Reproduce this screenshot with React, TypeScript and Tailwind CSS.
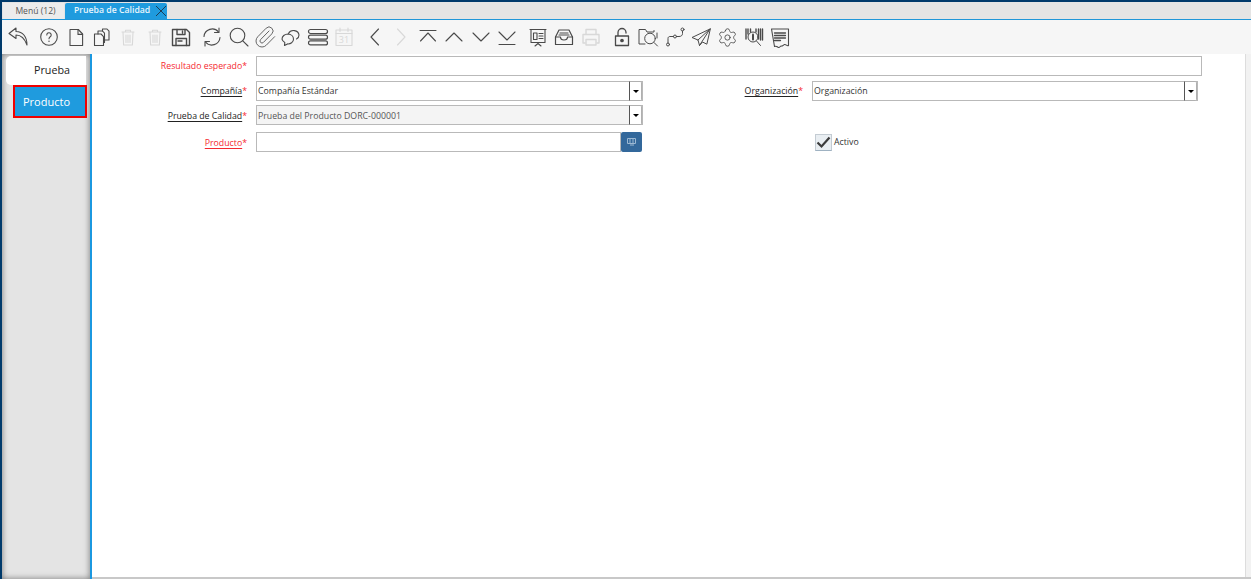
import { JSX, ReactNode } from "react";
import { Paperclip, Settings } from "lucide-react";

const font = { fontFamily: '"Open Sans", sans-serif' };

const Svg = ({ children, off, sw = 1.1 }: { children: ReactNode; off?: boolean; sw?: number }): JSX.Element => (
    <svg
        width="24"
        height="24"
        viewBox="0 0 24 24"
        fill="none"
        stroke={off ? "#d8d8d8" : "#4a4a4a"}
        strokeWidth={sw}
        strokeLinecap="round"
        strokeLinejoin="round"
    >
        {children}
    </svg>
);

const Trash = (): JSX.Element => (
    <Svg off>
        <path d="M6 7h12M9.500 7V5.200h5V7M7 7l.6 13h8.800l.6-13M10 10v7.500M12 10v7.500M14 10v7.500" />
    </Svg>
);

// toolbar groups, every cell is the same width
const groups: ReactNode[][] = [
    [
        <Svg>
            <path d="M10 3L3 8.500L10 13.500V10C15 10 18.500 13 21 20C21 12 17 6.500 10 6.500Z" />
        </Svg>,
    ],
    [
        <Svg>
            <circle cx="12" cy="12" r="8.300" />
            <path d="M9.800 10a2.200 2.200 0 1 1 3.400 1.800c-.8.6-1.200 1-1.200 2" />
            <path d="M12 16.100v.2" strokeWidth="1.400" />
        </Svg>,
        <Svg>
            <path d="M6 4.500h8.300L18.600 9v11.500H6z" />
            <path d="M14 4.500v4.900h4.600" />
        </Svg>,
        <Svg>
            <path d="M4.500 9h6.500l2.500 2.600V20.500H4.500z" />
            <path d="M8 9V6h4.500l2 2.200V17.500h-1" />
            <path d="M12.500 6V4h4.500l2 2.200V15h-4.500" />
        </Svg>,
        <Trash />,
        <Trash />,
        <Svg sw={1.4}>
            <path d="M3.500 4.500h14L20.500 7.500v13h-17z" />
            <path d="M8 4.500v5h8v-5M13.500 6v2M7 20.500v-7h10.500v7M9 16h4" />
        </Svg>,
    ],
    [
        <Svg>
            <path d="M4 11.500A8.200 8.200 0 0 1 18.500 7M20 12.500A8.200 8.200 0 0 1 5.500 17" />
            <path d="M19 3v4.500h-4.500M5 21v-4.500h4.500" />
        </Svg>,
        <Svg>
            <circle cx="10.500" cy="10.500" r="7.300" />
            <path d="M15.800 15.800L21 21" />
        </Svg>,
        <Paperclip size={24} strokeWidth={1} color="#666666" />,
        <Svg>
            <path d="M9.500 8.500a5.500 5 0 0 1 10.500 1.500c0 2-1 3.300-2.500 4" />
            <path d="M9 9a6 5.200 0 0 1 5.500 5.200c0 3-3 5-6 4.700L5.500 20.500l.3-3A5 5 0 0 1 3 14.200 6 5.200 0 0 1 9 9z" />
        </Svg>,
        <Svg sw={1.2}>
            <rect x="2.500" y="4.500" width="19" height="4" rx="2" />
            <rect x="2.500" y="10.200" width="19" height="4" rx="2" />
            <rect x="2.500" y="15.900" width="19" height="4" rx="2" />
        </Svg>,
        <Svg off>
            <rect x="4" y="5" width="16" height="15.500" />
            <path d="M4 8.500h16M8 3v3.500M16 3v3.500" />
            <text x="12" y="18" textAnchor="middle" fontSize="9" fill="#d8d8d8" stroke="none" style={font}>
                31
            </text>
        </Svg>,
    ],
    [
        <Svg>
            <path d="M15.500 4L8 12l7.500 8" />
        </Svg>,
        <Svg off>
            <path d="M8.500 4L16 12l-7.500 8" />
        </Svg>,
        <Svg>
            <path d="M4 5.500h16M4.500 16L12 8l7.500 8" />
        </Svg>,
        <Svg>
            <path d="M4 16l8-8 8 8" />
        </Svg>,
        <Svg>
            <path d="M4 8l8 8 8-8" />
        </Svg>,
        <Svg>
            <path d="M4 7l8 8 8-8M4 19.500h16" />
        </Svg>,
    ],
    [
        <Svg>
            <path d="M4 4.500h16M5 4.500v13h14v-13M12 17.500v1.500M9 21l3-2.500 3 2.500" />
            <path d="M7.500 8h3.500v6.500H7.500zM13 8.500h4M13 11h4M13 13.500h4" />
        </Svg>,
        <Svg sw={1.2}>
            <path d="M3.500 12L7 5h10l3.500 7v7.500h-17z" />
            <path d="M3.500 12h5c0 4 7 4 7 0h5M8 8h8M7 10h10" />
        </Svg>,
        <Svg off sw={1.4}>
            <path d="M7 9V4.500h10V9M6 18H4V9.500h16V18h-2" />
            <path d="M7 14.500h10V20H7z" />
        </Svg>,
    ],
    [
        <Svg sw={1.3}>
            <path d="M5.500 11h13v9.500h-13zM8 11V7.500a4 4 0 0 1 8 0V8" />
            <circle cx="12" cy="15.500" r="1.200" fill="#4a4a4a" />
        </Svg>,
        <Svg sw={1}>
            <path d="M18 5.500V7H11L9.500 4.500H3V19h6" />
            <circle cx="14" cy="13.500" r="5.300" />
            <path d="M18 17.500l3.500 3.500M21 8v5" />
        </Svg>,
        <Svg sw={1}>
            <circle cx="5" cy="19.500" r="1.500" />
            <circle cx="12" cy="11.500" r="1.500" />
            <circle cx="19.500" cy="4.500" r="1.500" />
            <path d="M5 18v-4.500c0-1.500 1-2 2-2h3.500M13.500 11.500h2.500c2 0 3.500-1 3.500-3V6" />
        </Svg>,
        <Svg sw={1}>
            <path d="M21 4L3 12.500l6 2.500 1.500 5.500 3-3.500 4 2zM21 4L9 15M21 4l-10.500 16.500" />
        </Svg>,
        <Settings size={21} strokeWidth={1} color="#4a4a4a" />,
        <Svg sw={1}>
            <path d="M4 4v10M6 4v5M8.500 4v3M14 4v3M16.500 4v10M18.500 4v11M20.500 4v11" strokeWidth="1.400" />
            <circle cx="11" cy="12" r="5" />
            <path d="M11 9.500v5" strokeWidth="2" />
            <path d="M14.500 16l4 4.500" />
        </Svg>,
        <Svg>
            <path d="M3.500 4h17v16.500c-1.500 1-2.500-1.500-4-1s-1.500 2-3 1.500-1.500 2-3 1.500-2-2-4-1z" />
            <path d="M6.500 8h11M6.500 10.500h11M6.500 13h11M6.500 15.500h6" strokeWidth="1.300" />
        </Svg>,
    ],
];

const Label = ({ text, red, plain, low }: { text: string; red?: boolean; plain?: boolean; low?: boolean }): JSX.Element => (
    <span className={`block text-right text-[8.75px] leading-none ${low ? "pt-[2px]" : ""}`}>
        <span className={`${red ? "text-[#f5282f]" : "text-[#222222]"} ${plain ? "" : "underline underline-offset-2"}`}>
            {text}
        </span>
        <span className="text-[#f5282f]">*</span>
    </span>
);

const Select = ({ value, disabled }: { value: string; disabled?: boolean }): JSX.Element => (
    <div
        className={`flex h-5 w-full items-center border border-[#b9b9b9] ${disabled ? "bg-[#f4f4f4] text-[#555555]" : "bg-white text-[#333333]"}`}
    >
        <span className={`flex-1 pl-[1px] text-[8.75px] leading-none ${disabled ? "pt-[2px]" : ""}`}>{value}</span>
        <span className="flex h-5 w-[13px] shrink-0 items-center justify-center rounded-r-[2px] border border-[#b0b0b0] border-l-[#555555] bg-white">
            <span className="h-0 w-0 border-x-[3px] border-t-[3px] border-x-transparent border-t-black" />
        </span>
    </div>
);

const Sidebar = (): JSX.Element => (
    <div className="h-full w-[90px] shrink-0 border-r-2 border-[#1b98e0] bg-[#e4e4e4] shadow-[inset_0_0_6px_#777777]">
        <div className="ml-1 mt-[2px] flex h-[29px] w-20 items-center rounded-l-[5px] bg-white pl-7 text-[10.75px] text-[#222222]">
            Prueba
        </div>
        <div className="ml-[11px] flex h-[33px] w-[74px] items-center border-2 border-[#f00000] bg-[#1f9bde] pl-2 pt-[1px] text-[11px] text-white">
            Producto
        </div>
    </div>
);

export default function App(): JSX.Element {
    return (
        <div className="flex h-[579px] w-full flex-col overflow-hidden border-l-2 border-t-2 border-[#003a6b] bg-white" style={font}>
            {/* tab strip */}
            <div className="flex h-[18px] shrink-0 items-end border-b border-[#1f96d8] bg-[#e4e4e4]">
                <div className="ml-[1px] flex h-4 w-[61px] items-center justify-center bg-[#ececec] pl-1 text-[8.6px] text-[#555555]">
                    Menú (12)
                </div>
                <div className="ml-[1px] flex h-4 w-[102px] items-center rounded-t-[2px] bg-[#1f9bde] pl-[9px] text-[8.7px] font-semibold text-[#e8f5fc]">
                    <span className="w-[81px]">Prueba de Calidad</span>
                    <svg width="12" height="12" viewBox="0 0 12 12" stroke="#1d3d55" strokeWidth="1">
                        <path d="M1 1l10 10M11 1L1 11" />
                    </svg>
                </div>
            </div>

            {/* toolbar */}
            <div className="flex h-[34px] shrink-0 items-center gap-[4.6px] bg-[#f6f6f6] pl-[3px]">
                {groups.map((group, g) => (
                    <div key={g} className="flex">
                        {group.map((icon, i) => (
                            <span key={i} className="flex h-6 w-[26.4px] items-center justify-center">
                                {icon}
                            </span>
                        ))}
                    </div>
                ))}
            </div>

            <div className="flex min-h-0 flex-1">
                <Sidebar />
                <div className="flex flex-1 border-b-2 border-[#c8c8c8]">
                    <div className="flex-1 pt-[2px]">
                        <div className="flex items-center">
                            <div className="w-[155px]">
                                <Label text="Resultado esperado" red plain />
                            </div>
                            <div className="ml-[9px] h-5 w-[946px] border border-[#b9b9b9] bg-white" />
                        </div>

                        <div className="mt-[5px] flex items-center">
                            <div className="w-[155px]">
                                <Label text="Compañía" />
                            </div>
                            <div className="ml-[9px] w-[387px]">
                                <Select value="Compañía Estándar" />
                            </div>
                            <div className="w-[160px]">
                                <Label text="Organización" />
                            </div>
                            <div className="ml-[9px] w-[386px]">
                                <Select value="Organización" />
                            </div>
                        </div>

                        <div className="mt-[4px] flex items-center">
                            <div className="w-[155px]">
                                <Label text="Prueba de Calidad" low />
                            </div>
                            <div className="ml-[9px] w-[387px]">
                                <Select value="Prueba del Producto DORC-000001" disabled />
                            </div>
                        </div>

                        <div className="mt-[7px] flex items-center">
                            <div className="w-[155px]">
                                <Label text="Producto" red low />
                            </div>
                            <div className="ml-[9px] flex w-[386px]">
                                <div className="h-5 flex-1 border border-[#b9b9b9] bg-white" />
                                <span className="flex h-5 w-[21px] items-center justify-center rounded-[2px] bg-[#33689b]">
                                    <svg width="9" height="8" viewBox="0 0 9 8" fill="none" stroke="#9db9d3" strokeWidth="1">
                                        <path d="M.5 .5h8v5h-8zM3 .5v5M6 .5v5M3 7h4" />
                                    </svg>
                                </span>
                            </div>
                            <div className="ml-[173px] flex items-center gap-[2px]">
                                <span className="flex h-[17px] w-[17px] items-center justify-center border border-[#c4ccd3] border-b-[#9fb2c2] bg-[#e9eef2]">
                                    <svg width="15" height="13" viewBox="0 0 15 13" fill="none" stroke="#3c3c3c" strokeWidth="2.200">
                                        <path d="M1.500 6.500l4 4L13.500 1.500" />
                                    </svg>
                                </span>
                                <span className="text-[8.75px] leading-none text-[#333333]">Activo</span>
                            </div>
                        </div>
                    </div>
                    <div className="w-[6px] shrink-0 border-l border-[#dddddd] bg-[#f2f2f2]" />
                </div>
            </div>
        </div>
    );
}
